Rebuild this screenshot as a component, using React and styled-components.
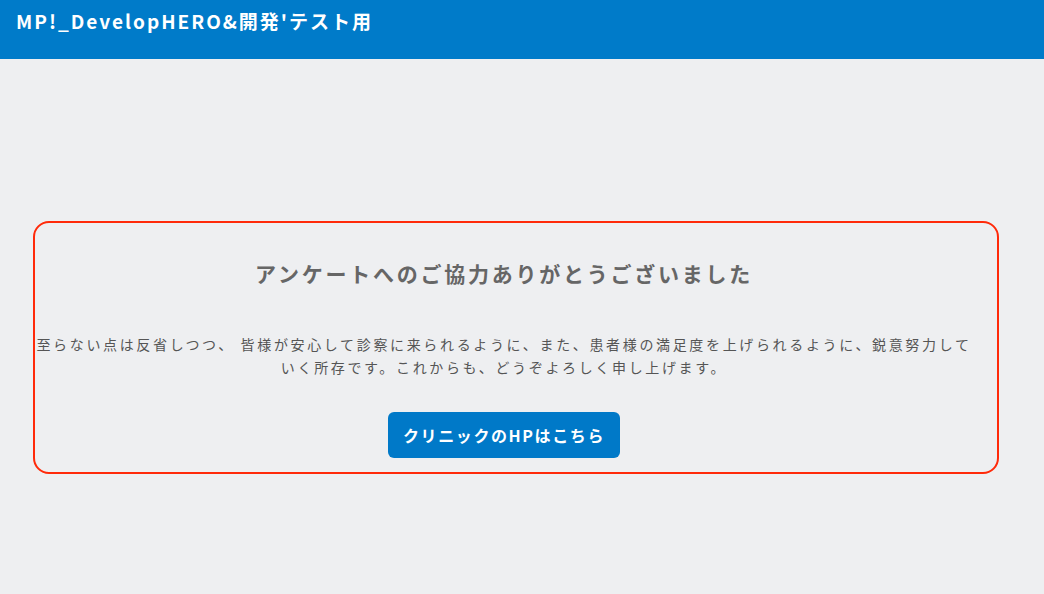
import React from "react";
import styled, { createGlobalStyle } from "styled-components";

const GlobalStyle = createGlobalStyle`
  html, body {
    margin: 0;
    padding: 0;
    background: #eeeff1;
    font-family: "Noto Sans CJK JP", "Noto Sans", sans-serif;
  }
`;

const Header = styled.header`
  height: 59px;
  background: #007bc9;
  box-sizing: border-box;
  padding: 6px 16px 0;
`;

const Title = styled.h1`
  margin: 0;
  color: #fff;
  font-size: 19px;
  font-weight: 700;
  letter-spacing: 2px;
  line-height: 30px;
`;

const Main = styled.main`
  padding: 162px 45px 0 33px;
`;

const Card = styled.section`
  border: 2px solid #ff2a0a;
  border-radius: 16px;
  height: 253px;
  box-sizing: border-box;
  padding: 30px 24px 0 0;
  display: flex;
  flex-direction: column;
  align-items: center;
  text-align: center;
`;

const Heading = styled.h2`
  margin: 0;
  color: #666;
  font-size: 21px;
  font-weight: 700;
  letter-spacing: 2.75px;
  line-height: 40px;
`;

const Message = styled.p`
  margin: 40px 0 0;
  color: #555;
  font-size: 14px;
  letter-spacing: 2.65px;
  line-height: 23px;
`;

const Button = styled.a`
  margin-top: 33px;
  display: inline-flex;
  align-items: center;
  justify-content: center;
  width: 232px;
  height: 46px;
  border-radius: 6px;
  background: #0079c8;
  color: #fff;
  font-size: 16px;
  font-weight: 700;
  letter-spacing: 1.6px;
  text-decoration: none;
`;

export default function App() {
  return (
    <>
      <GlobalStyle />
      <Header>
        <Title>MP!_DevelopHERO&amp;開発'テスト用</Title>
      </Header>
      <Main>
        <Card>
          <Heading>アンケートへのご協力ありがとうございました</Heading>
          <Message>
            至らない点は反省しつつ、 皆様が安心して診察に来られるように、また、患者様の満足度を上げられるように、鋭意努力していく所存です。これからも、どうぞよろしく申し上げます。
          </Message>
          <Button href="#">クリニックのHPはこちら</Button>
        </Card>
      </Main>
    </>
  );
}
